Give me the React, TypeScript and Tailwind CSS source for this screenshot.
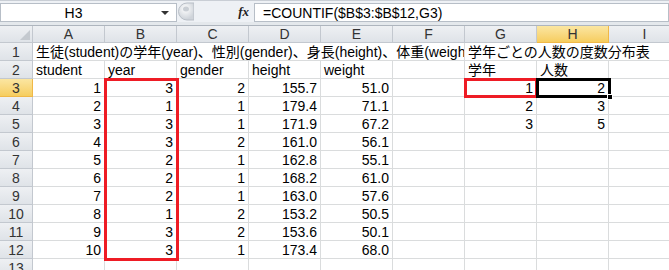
const COLS = ["A", "B", "C", "D", "E", "F", "G", "H", "I"];

type Row = (string | number | null)[];

// rows 2..13, one entry per column A..I
const ROWS: Row[] = [
  ["student", "year", "gender", "height", "weight", null, "学年", "人数", null],
  [1, 3, 2, "155.7", "51.0", null, 1, 2, null],
  [2, 1, 1, "179.4", "71.1", null, 2, 3, null],
  [3, 3, 1, "171.9", "67.2", null, 3, 5, null],
  [4, 3, 2, "161.0", "56.1", null, null, null, null],
  [5, 2, 1, "162.8", "55.1", null, null, null, null],
  [6, 2, 1, "168.2", "61.0", null, null, null, null],
  [7, 2, 1, "163.0", "57.6", null, null, null, null],
  [8, 1, 2, "153.2", "50.5", null, null, null, null],
  [9, 3, 2, "153.6", "50.1", null, null, null, null],
  [10, 3, 1, "173.4", "68.0", null, null, null, null],
  [null, null, null, null, null, null, null, null, null],
];

const isNum = (v: string | number | null) =>
  typeof v === "number" || (typeof v === "string" && /^[\d.]+$/.test(v));

const RowHead = ({ n, active }: { n: number; active?: boolean }) => (
  <div
    className={
      active
        ? "h-[18px] flex items-center justify-center border-r border-b border-[#f0b847] bg-linear-to-b from-[#fbe6a1] to-[#f6cd5e] text-[#333]"
        : "h-[18px] flex items-center justify-center border-r border-b border-[#c3c8cf] bg-linear-to-b from-[#eef0f3] to-[#dfe3e8] text-[#333]"
    }
  >
    {n}
  </div>
);

const Cell = ({ v }: { v: string | number | null }) => (
  <div
    className={
      isNum(v)
        ? "h-[18px] flex items-center justify-end px-[3px] border-r border-b border-[#dadcdd] whitespace-nowrap overflow-hidden"
        : "h-[18px] flex items-center px-[3px] border-r border-b border-[#dadcdd] whitespace-nowrap overflow-hidden"
    }
  >
    {v}
  </div>
);

export default function App() {
  return (
    <div
      className="w-[669px] h-[270px] overflow-hidden bg-white text-[14px] text-black leading-none"
      style={{ fontFamily: '"Liberation Sans", "Noto Sans CJK JP", sans-serif' }}
    >
      {/* formula bar */}
      <div className="flex h-[22px] bg-[#eef1f5] border-t border-[#c9ced5]">
        <div className="w-[177px] mt-[2px] h-[19px] bg-white border border-[#b7bec7] flex items-center">
          <span className="flex-1 text-center pr-[14px]">H3</span>
          <svg width="10" height="6" className="mr-[6px]" viewBox="0 0 10 6">
            <path d="M1 1h8L5 5z" fill="#333" />
          </svg>
        </div>
        <div className="w-[77px] flex items-center">
          <svg width="16" height="19" viewBox="0 0 16 19" className="ml-[1px]">
            <defs>
              <radialGradient id="g" cx="0.45" cy="0.35" r="0.6">
                <stop offset="0" stopColor="#ffffff" />
                <stop offset="1" stopColor="#cfd4da" />
              </radialGradient>
            </defs>
            <path d="M16 1H9a8.5 8.5 0 0 0 0 17h7z" fill="url(#g)" stroke="#b9bfc7" />
            <ellipse cx="8" cy="7" rx="3" ry="2.5" fill="#c9ced4" />
          </svg>
          <span
            className="ml-auto mr-[5px] text-[13px] italic font-bold text-[#222]"
            style={{ fontFamily: '"Liberation Serif", serif' }}
          >
            fx
          </span>
        </div>
        <div className="flex-1 mt-[2px] h-[19px] bg-white border border-[#b7bec7] flex items-center pl-[8px]">
          =COUNTIF($B$3:$B$12,G3)
        </div>
      </div>
      <div className="h-[4px] bg-[#e4e8ec] border-b border-[#aeb5be]" />

      {/* sheet */}
      <div className="relative">
        <div className="grid grid-cols-[33px_repeat(9,72px)]">
          {/* column headers */}
          <div className="h-[17px] border-r border-b border-[#c3c8cf] bg-linear-to-b from-[#eef0f3] to-[#dfe3e8] flex items-end justify-end p-[2px]">
            <svg width="10" height="10" viewBox="0 0 10 10">
              <path d="M10 0v10H0z" fill="#c4c9cf" />
            </svg>
          </div>
          {COLS.map((c) => (
            <div
              key={c}
              className={
                c === "H"
                  ? "h-[17px] flex items-center justify-center border-r border-b border-[#f0b847] bg-linear-to-b from-[#fbe6a1] to-[#f6cd5e] text-[#333]"
                  : "h-[17px] flex items-center justify-center border-r border-b border-[#c3c8cf] bg-linear-to-b from-[#eef0f3] to-[#dfe3e8] text-[#333]"
              }
            >
              {c}
            </div>
          ))}

          {/* row 1 */}
          <RowHead n={1} />
          <div className="col-span-6 h-[18px] flex items-center px-[3px] border-r border-b border-[#dadcdd] whitespace-nowrap overflow-hidden">
            生徒(student)の学年(year)、性別(gender)、身長(height)、体重(weight)
          </div>
          <div className="col-span-3 h-[18px] flex items-center px-[3px] border-b border-[#dadcdd] whitespace-nowrap overflow-hidden">
            学年ごとの人数の度数分布表
          </div>

          {/* rows 2..13 */}
          {ROWS.map((r, i) => (
            <div key={i} className="contents">
              <RowHead n={i + 2} active={i + 2 === 3} />
              {r.map((v, j) => (
                <Cell key={j} v={v} />
              ))}
            </div>
          ))}
        </div>

        {/* selection overlays */}
        <div className="absolute left-[104px] top-[52px] w-[75px] h-[183px] border-[3px] border-[#ee1c25]" />
        <div className="absolute left-[464px] top-[52px] w-[74px] h-[20px] border-[3px] border-[#ee1c25]" />
        <div className="absolute left-[536px] top-[52px] w-[75px] h-[20px] border-[3px] border-black" />
        <div className="absolute left-[607px] top-[68px] w-[6px] h-[6px] bg-black border border-white" />
      </div>
    </div>
  );
}
